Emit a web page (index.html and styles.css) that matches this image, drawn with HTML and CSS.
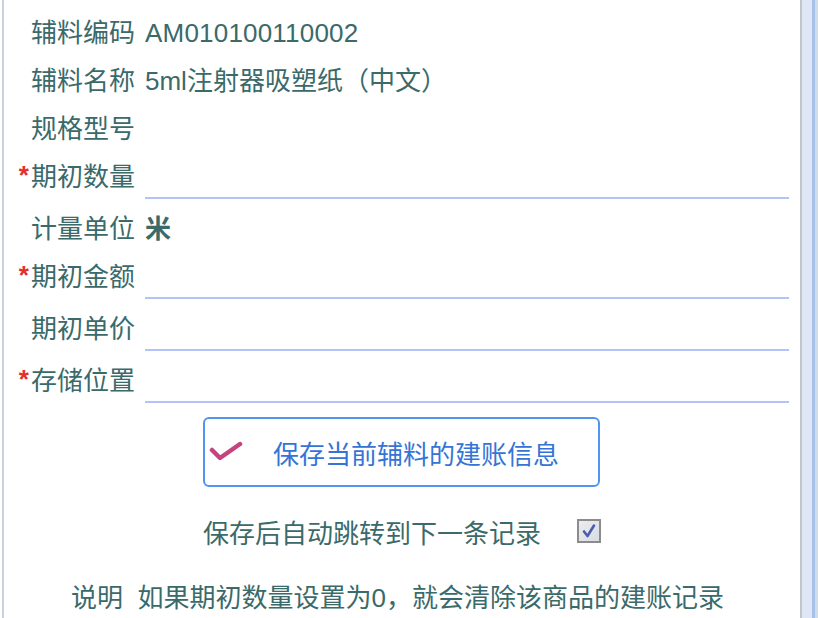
FILE: index.html
```html
<!DOCTYPE html>
<html lang="zh-CN">
<head>
<meta charset="utf-8">
<title>辅料建账</title>
<link rel="stylesheet" href="styles.css">
</head>
<body>
<div class="frame">
  <div class="left-edge"></div>
  <div class="panel">
    <div class="form">
      <div class="row"><div class="label">辅料编码</div><div class="value code">AM010100110002</div></div>
      <div class="row"><div class="label">辅料名称</div><div class="value">5ml注射器吸塑纸（中文）</div></div>
      <div class="row"><div class="label">规格型号</div><div class="value"></div></div>
      <div class="row input-row"><div class="label"><span class="req">*</span>期初数量</div><div class="field"></div></div>
      <div class="row"><div class="label">计量单位</div><div class="value strong">米</div></div>
      <div class="row input-row"><div class="label"><span class="req">*</span>期初金额</div><div class="field"></div></div>
      <div class="row input-row"><div class="label">期初单价</div><div class="field"></div></div>
      <div class="row input-row"><div class="label"><span class="req">*</span>存储位置</div><div class="field"></div></div>
    </div>
    <div class="actions">
      <div class="save-btn">
        <svg class="check-icon" width="34" height="24" viewBox="0 0 34 24"><path d="M3 10 L11 18 L31 4" fill="none" stroke="#c5447e" stroke-width="4.5" stroke-linecap="round" stroke-linejoin="round"/></svg>
        <span class="btn-text">保存当前辅料的建账信息</span>
      </div>
      <div class="auto-next">
        <span>保存后自动跳转到下一条记录</span>
        <span class="checkbox"><svg width="16" height="16" viewBox="0 0 16 16"><path d="M3 8.5 L6.5 13 L13 2.5" fill="none" stroke="#4c5cae" stroke-width="2.6" stroke-linecap="round" stroke-linejoin="round"/></svg></span>
      </div>
      <div class="note">说明&nbsp; 如果期初数量设置为0，就会清除该商品的建账记录</div>
    </div>
  </div>
  <div class="right-edge">
    <div class="re-a"></div>
    <div class="re-b"></div>
    <div class="re-c"></div>
  </div>
</div>
</body>
</html>
```

FILE: styles.css
```css
html, body {
  margin: 0;
  padding: 0;
  background: #ffffff;
}
body {
  font-family: "Liberation Sans", "Noto Sans CJK SC", sans-serif;
  font-size: 26px;
  color: #3a6a6a;
  overflow: hidden;
}
.frame {
  display: flex;
  width: 818px;
  height: 618px;
}
.left-edge {
  width: 2px;
  margin-left: 2px;
  background: #c9d2de;
}
.panel {
  flex: 1;
  display: flex;
  flex-direction: column;
  padding: 9px 11px 0 0;
}
.row {
  display: grid;
  grid-template-columns: 131px 1fr;
  column-gap: 10px;
  height: 48px;
  align-items: center;
}
.row.input-row {
  height: 52px;
  align-items: start;
}
.label {
  text-align: right;
  line-height: 48px;
  white-space: nowrap;
}
.req {
  color: #e5302a;
  font-size: 26px;
  font-weight: bold;
  margin-right: 2px;
  position: relative;
  top: -2px;
}
.value {
  line-height: 48px;
  white-space: nowrap;
}
.value.code {
  letter-spacing: 0.2px;
}
.value.strong {
  font-weight: bold;
}
.field {
  height: 44px;
  border-bottom: 2px solid #b3c3f7;
}
.actions {
  display: flex;
  flex-direction: column;
  align-items: center;
  margin-right: -11px;
}
.save-btn {
  margin-top: 8px;
  margin-left: -1px;
  width: 389px;
  height: 66px;
  border: 2px solid #5394f2;
  border-radius: 6px;
  display: flex;
  align-items: center;
  padding-left: 4px;
  box-sizing: content-box;
}
.check-icon {
  flex: none;
  margin-right: 30px;
  filter: blur(0.4px);
}
.btn-text {
  color: #3574d6;
  white-space: nowrap;
}
.auto-next {
  margin-top: 24px;
  display: flex;
  align-items: center;
  gap: 36px;
  height: 40px;
}
.checkbox {
  width: 20px;
  height: 20px;
  border: 2px solid #8c8c8c;
  background: linear-gradient(135deg, #ececec, #d8dce4);
  display: flex;
  align-items: center;
  justify-content: center;
}
.note {
  margin-top: 26px;
  margin-right: 9px;
  white-space: nowrap;
}
.right-edge {
  display: flex;
  width: 18px;
  border-left: 2px solid #c2c6cb;
  box-sizing: border-box;
}
.re-a {
  width: 10px;
  background: #dfe7f6;
}
.re-b {
  width: 3px;
  background: #a9c0e9;
}
.re-c {
  width: 3px;
  background: #d1dce9;
}
```
